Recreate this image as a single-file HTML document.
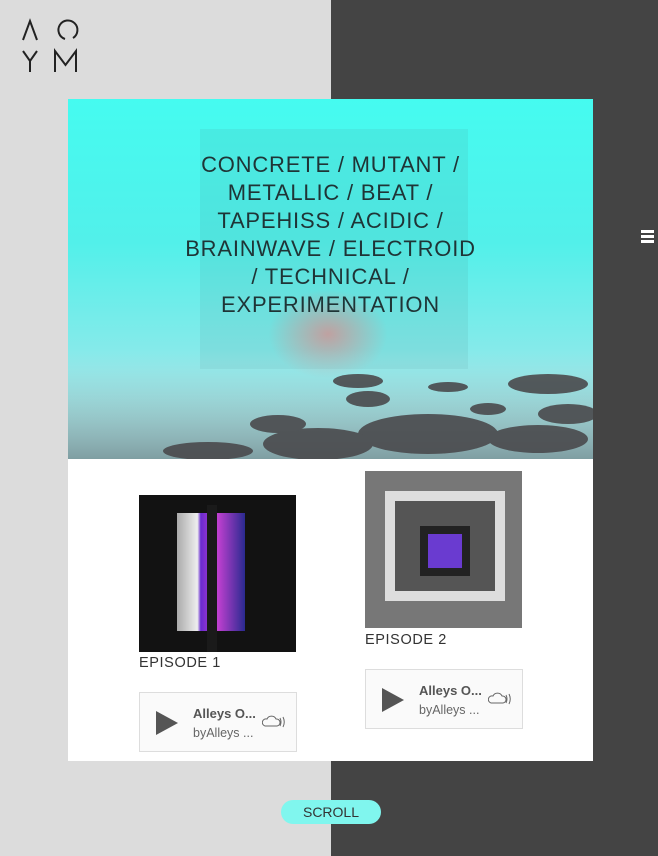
<!DOCTYPE html>
<html><head><meta charset="utf-8"><style>
*{margin:0;padding:0;box-sizing:border-box}
body{width:658px;height:856px;position:relative;overflow:hidden;font-family:"Liberation Sans",sans-serif;background:#444}
.left{position:absolute;left:0;top:0;width:331px;height:856px;background:#dcdcdc}
.right{position:absolute;left:331px;top:0;width:327px;height:856px;background:#444}
.hero{position:absolute;left:68px;top:99px;width:525px;height:360px;overflow:hidden;background:linear-gradient(#45fbf0 0%,#52f0ea 40%,#8ee9ea 75%,#a8d8da 100%)}
.txt{position:absolute;left:0;width:525px;top:52px;text-align:center;color:#1f3436;font-size:22px;line-height:28px;letter-spacing:0.8px;font-weight:normal}
.panel{position:absolute;left:68px;top:459px;width:525px;height:302px;background:#fff}
.ep{position:absolute;font-size:14.5px;color:#333;letter-spacing:0.6px}
.card{position:absolute;width:158px;height:60px;border:1px solid #ddd;background:#fafafa}
.card .pl{position:absolute;left:16px;top:18px;width:0;height:0;border-left:22px solid #555;border-top:12px solid transparent;border-bottom:12px solid transparent}
.card .t{position:absolute;left:53px;top:13px;font-size:13px;font-weight:bold;color:#555}
.card .s{position:absolute;left:53px;top:33px;font-size:12.5px;color:#666}
.card svg{position:absolute;left:122px;top:21px}
.scroll{position:absolute;left:281px;top:800px;width:100px;height:24px;border-radius:12px;background:#80f6ee;color:#333;font-size:14px;text-align:center;line-height:24px}
.ham{position:absolute;left:641px;top:230px;width:13px}
.ham i{display:block;height:2.5px;background:#fff;margin-bottom:2.5px}
</style></head><body>
<div class="left"></div><div class="right"></div>
<svg style="position:absolute;left:20px;top:18px" width="60" height="56" viewBox="0 0 60 56" fill="none" stroke="#222" stroke-width="2">
<path d="M3 22 L10 3 L17 22"/>
<path d="M45 21 A9.5 9.5 0 1 1 53 20"/>
<path d="M3 33 L10 43 L17 33 M10 43 V54"/>
<path d="M35 54 V33 L45.5 47 L56 33 V54"/>
</svg>
<div class="hero">
<div style="position:absolute;left:132px;top:30px;width:268px;height:240px;background:rgba(80,150,150,0.13)"></div>
<div style="position:absolute;left:200px;top:190px;width:120px;height:90px;border-radius:50%;background:radial-gradient(rgba(240,120,120,0.6),rgba(240,120,120,0) 70%)"></div>
<svg style="position:absolute;left:0;top:240px" width="525" height="120">
<defs><linearGradient id="w" x1="0" y1="0" x2="0" y2="1"><stop offset="0" stop-color="#b5e3e3" stop-opacity="0"/><stop offset="1" stop-color="#7f9ea2"/></linearGradient></defs>
<rect x="0" y="10" width="525" height="110" fill="url(#w)"/>
<g fill="#4a4a4d" opacity="0.9">
<ellipse cx="290" cy="42" rx="25" ry="7"/><ellipse cx="380" cy="48" rx="20" ry="5"/><ellipse cx="480" cy="45" rx="40" ry="10"/>
<ellipse cx="300" cy="60" rx="22" ry="8"/><ellipse cx="500" cy="75" rx="30" ry="10"/>
<ellipse cx="360" cy="95" rx="70" ry="20"/><ellipse cx="250" cy="105" rx="55" ry="16"/><ellipse cx="470" cy="100" rx="50" ry="14"/>
<ellipse cx="140" cy="112" rx="45" ry="9"/><ellipse cx="210" cy="85" rx="28" ry="9"/><ellipse cx="420" cy="70" rx="18" ry="6"/>
</g></svg>
<div class="txt">CONCRETE / MUTANT /<br>METALLIC / BEAT /<br>TAPEHISS / ACIDIC /<br>BRAINWAVE / ELECTROID<br>/ TECHNICAL /<br>EXPERIMENTATION</div>
</div>
<div class="panel">
<div style="position:absolute;left:71px;top:36px;width:157px;height:157px;background:#121212">
<div style="position:absolute;left:38px;top:18px;width:68px;height:118px;background:linear-gradient(90deg,#aaa,#eee 30%,#6a2bd0 35%,#c040d0 60%,#2a2a90)"></div>
<div style="position:absolute;left:68px;top:10px;width:10px;height:147px;background:#1a1a1a"></div>
</div>
<div class="ep" style="left:71px;top:196px">EPISODE 1</div>
<div style="position:absolute;left:297px;top:12px;width:157px;height:157px;background:#777">
<div style="position:absolute;left:20px;top:20px;width:120px;height:110px;background:#555;border:10px solid #ddd"></div>
<div style="position:absolute;left:55px;top:55px;width:50px;height:50px;background:#6a3bd0;border:8px solid #222"></div>
</div>
<div class="ep" style="left:297px;top:173px">EPISODE 2</div>
<div class="card" style="left:71px;top:233px"><div class="pl"></div><div class="t">Alleys O...</div><div class="s">byAlleys ...</div>
<svg width="24" height="14" fill="none" stroke="#666" stroke-width="1"><path d="M3 12 H15 A3.5 3.5 0 0 0 14 5 A5 5 0 0 0 5 5 A3.5 3.5 0 0 0 3 12Z M18 4 Q20 8 18 12 M21 3 Q23.5 8 21 13"/></svg></div>
<div class="card" style="left:297px;top:210px"><div class="pl"></div><div class="t">Alleys O...</div><div class="s">byAlleys ...</div>
<svg width="24" height="14" fill="none" stroke="#666" stroke-width="1"><path d="M3 12 H15 A3.5 3.5 0 0 0 14 5 A5 5 0 0 0 5 5 A3.5 3.5 0 0 0 3 12Z M18 4 Q20 8 18 12 M21 3 Q23.5 8 21 13"/></svg></div>
</div>
<div class="ham"><i></i><i></i><i></i></div>
<div class="scroll">SCROLL</div>
</body></html>
